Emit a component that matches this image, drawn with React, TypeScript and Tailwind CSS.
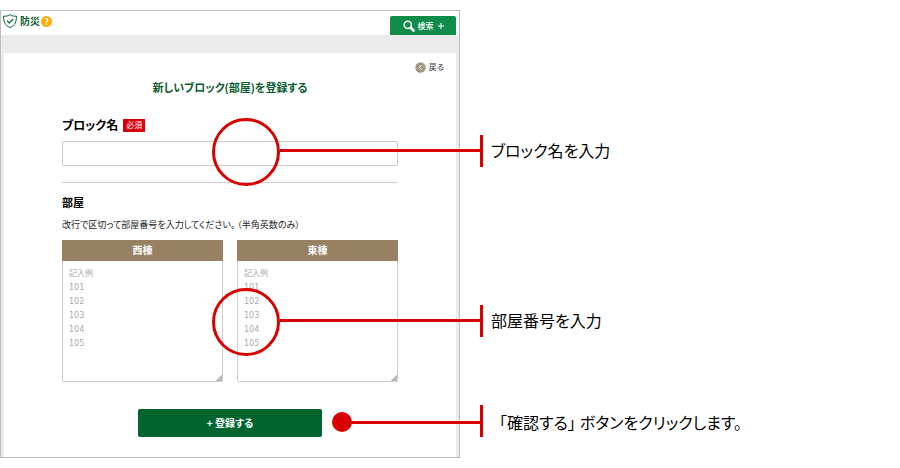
import React from "react";

const EXAMPLE = "記入例\n101\n102\n103\n104\n105";

type CalloutProps = {
  kind: "ring" | "dot";
  className: string;
  children: React.ReactNode;
};

/* Red marker, leader line and end bar, followed by the instruction text. */
function Callout({ kind, className, children }: CalloutProps) {
  const ring = kind === "ring";
  return (
    <div className={`pointer-events-none absolute z-10 flex h-8 ${className}`}>
      {ring ? (
        <span className="-mt-[17px] size-[68px] shrink-0 rounded-full border-3 border-[#d80000]" />
      ) : (
        <span className="mt-[7px] size-5 shrink-0 rounded-full bg-[#d80000]" />
      )}
      <span className={`h-[3px] flex-1 bg-[#d80000] ${ring ? "mt-[14px]" : "mt-4 -ml-px"}`} />
      <span className="h-8 w-[3px] shrink-0 bg-[#d80000]" />
      <p
        className={`absolute left-full whitespace-nowrap text-[16px] leading-[30px] text-black [font-feature-settings:'palt'] ${
          ring ? "ml-2" : "ml-4 mt-0.5"
        }`}
      >
        {children}
      </p>
    </div>
  );
}

function RoomColumn({ id, name }: { id: string; name: string }) {
  return (
    <div className="flex flex-col">
      <label
        htmlFor={id}
        className="block h-[21px] bg-[#988163] text-center text-[10px] font-bold leading-5 text-white"
      >
        {name}
      </label>
      <textarea
        id={id}
        placeholder={EXAMPLE}
        className="block h-[121px] w-full rounded-b-xs border border-t-0 border-[#cccccc] bg-white px-1.5 py-1.5 font-['DejaVu_Sans','Noto_Sans_CJK_JP',sans-serif] text-[8px] leading-[14px] text-black outline-none placeholder:text-[#aaaaaa] [&::-webkit-resizer]:bg-[linear-gradient(135deg,transparent_78%,#bbbbbb_78%)]"
      />
    </div>
  );
}

function Header() {
  return (
    <header className="flex h-6 justify-between bg-white">
      <div className="flex h-5 items-center pl-0.5">
        <svg viewBox="0 0 14 14" className="size-[14px]" fill="none" stroke="#0a6336" strokeLinejoin="round">
          <path d="M7 .6C5.200 2 3 2.400.600 2.100c-.2 5.500 1.300 9.500 6.400 11.400 5.100-1.900 6.600-5.900 6.400-11.400C11 2.400 8.800 2 7 .6Z" />
          <path d="m4 6.700 2.300 2.300 4-4.200" strokeWidth="1.200" />
        </svg>
        <h1 className="ml-[3px] text-[10px] font-bold leading-4 text-[#0a5c31]">防災</h1>
        <button
          type="button"
          aria-label="ヘルプ"
          className="ml-px flex size-[11px] items-center justify-center rounded-full bg-[#ffab00] text-[9px] font-bold leading-none text-white"
        >
          ?
        </button>
      </div>
      <button
        type="button"
        className="mr-[3px] mt-[5px] flex h-[19px] w-[66px] items-center justify-center rounded-t-xs bg-[#0f8c4a] text-[8px] font-medium text-white"
      >
        <svg viewBox="0 0 12 12" className="size-3" fill="none" stroke="currentColor">
          <circle cx="4.800" cy="4.800" r="3.600" strokeWidth="1.500" />
          <path d="m8 8 2.500 2.500" strokeWidth="2.600" strokeLinecap="round" />
        </svg>
        <span className="ml-[3px]">検索</span>
        <svg viewBox="0 0 6 6" className="ml-1 size-1.5" stroke="currentColor">
          <path d="M0 3h6M3 0v6" />
        </svg>
      </button>
    </header>
  );
}

export default function App() {
  return (
    <div className="bg-white pt-[10px] pb-[10px] font-['Noto_Sans_CJK_JP',sans-serif]" lang="ja">
      <main className="w-23/45 min-w-[460px] border border-[#bdbdbd] bg-[#ebebeb]">
        <Header />
        <section className="mx-[3px] mt-[18px] bg-white pt-2 pb-5">
          <div className="flex h-3 justify-end pr-3">
            <a href="#back" className="flex items-center gap-[3px] text-[8px] leading-3 text-[#333333] [font-feature-settings:'palt']">
              <svg viewBox="0 0 11 11" className="size-[11px]">
                <circle cx="5.500" cy="5.500" r="5.200" fill="#a39785" />
                <path d="M6.500 3.300 4.300 5.500l2.200 2.200" fill="none" stroke="white" />
              </svg>
              戻る
            </a>
          </div>
          <h2 className="mt-1.5 text-center text-[11px] font-bold leading-4 text-[#0a5c31] [font-feature-settings:'palt']">
            新しいブロック(部屋)を登録する
          </h2>
          <form className="mt-[22px] px-[58px]" onSubmit={(e) => e.preventDefault()}>
            <div className="flex h-4 items-center gap-[5px]">
              <label htmlFor="block-name" className="text-[12px] font-bold leading-4 text-black [font-feature-settings:'palt']">
                ブロック名
              </label>
              <span className="h-[13px] bg-[#dc000c] px-[3px] text-[8px] leading-3 text-white">必須</span>
            </div>
            <div className="relative mt-2">
              <input
                id="block-name"
                type="text"
                className="block h-[25px] w-full rounded-xs border border-[#cccccc] bg-white px-1.5 text-[10px] outline-none"
              />
              <Callout kind="ring" className="-top-1.5 -right-[85px] left-[150px]">
                ブロック名を入力
              </Callout>
            </div>
            <hr className="mt-4 border-[#cccccc]" />
            <h3 className="mt-[11px] text-[11px] font-bold leading-4 text-black">部屋</h3>
            <p className="mt-[7px] text-[9px] leading-4 text-[#222222] [font-feature-settings:'palt']">
              改行で区切って部屋番号を入力してください。
              <span className="ml-0.5">（半角英数のみ）</span>
            </p>
            <div className="relative mt-[7px] grid grid-cols-2 gap-[14px]">
              <RoomColumn id="rooms-west" name="西棟" />
              <RoomColumn id="rooms-east" name="東棟" />
              <Callout kind="ring" className="top-[65px] -right-[85px] left-[150px]">
                部屋番号を入力
              </Callout>
            </div>
            <div className="relative mt-[27px] flex justify-center">
              <button
                type="submit"
                className="h-7 w-[184px] rounded-xs bg-[#00642f] text-[10px] font-bold leading-4 text-white [font-feature-settings:'palt']"
              >
                + 登録する
              </button>
              <Callout kind="dot" className="-top-1 -right-[85px] left-[calc(50%+102px)]">
                「確認する」<span className="ml-1">ボタンをクリックします。</span>
              </Callout>
            </div>
          </form>
        </section>
      </main>
    </div>
  );
}
